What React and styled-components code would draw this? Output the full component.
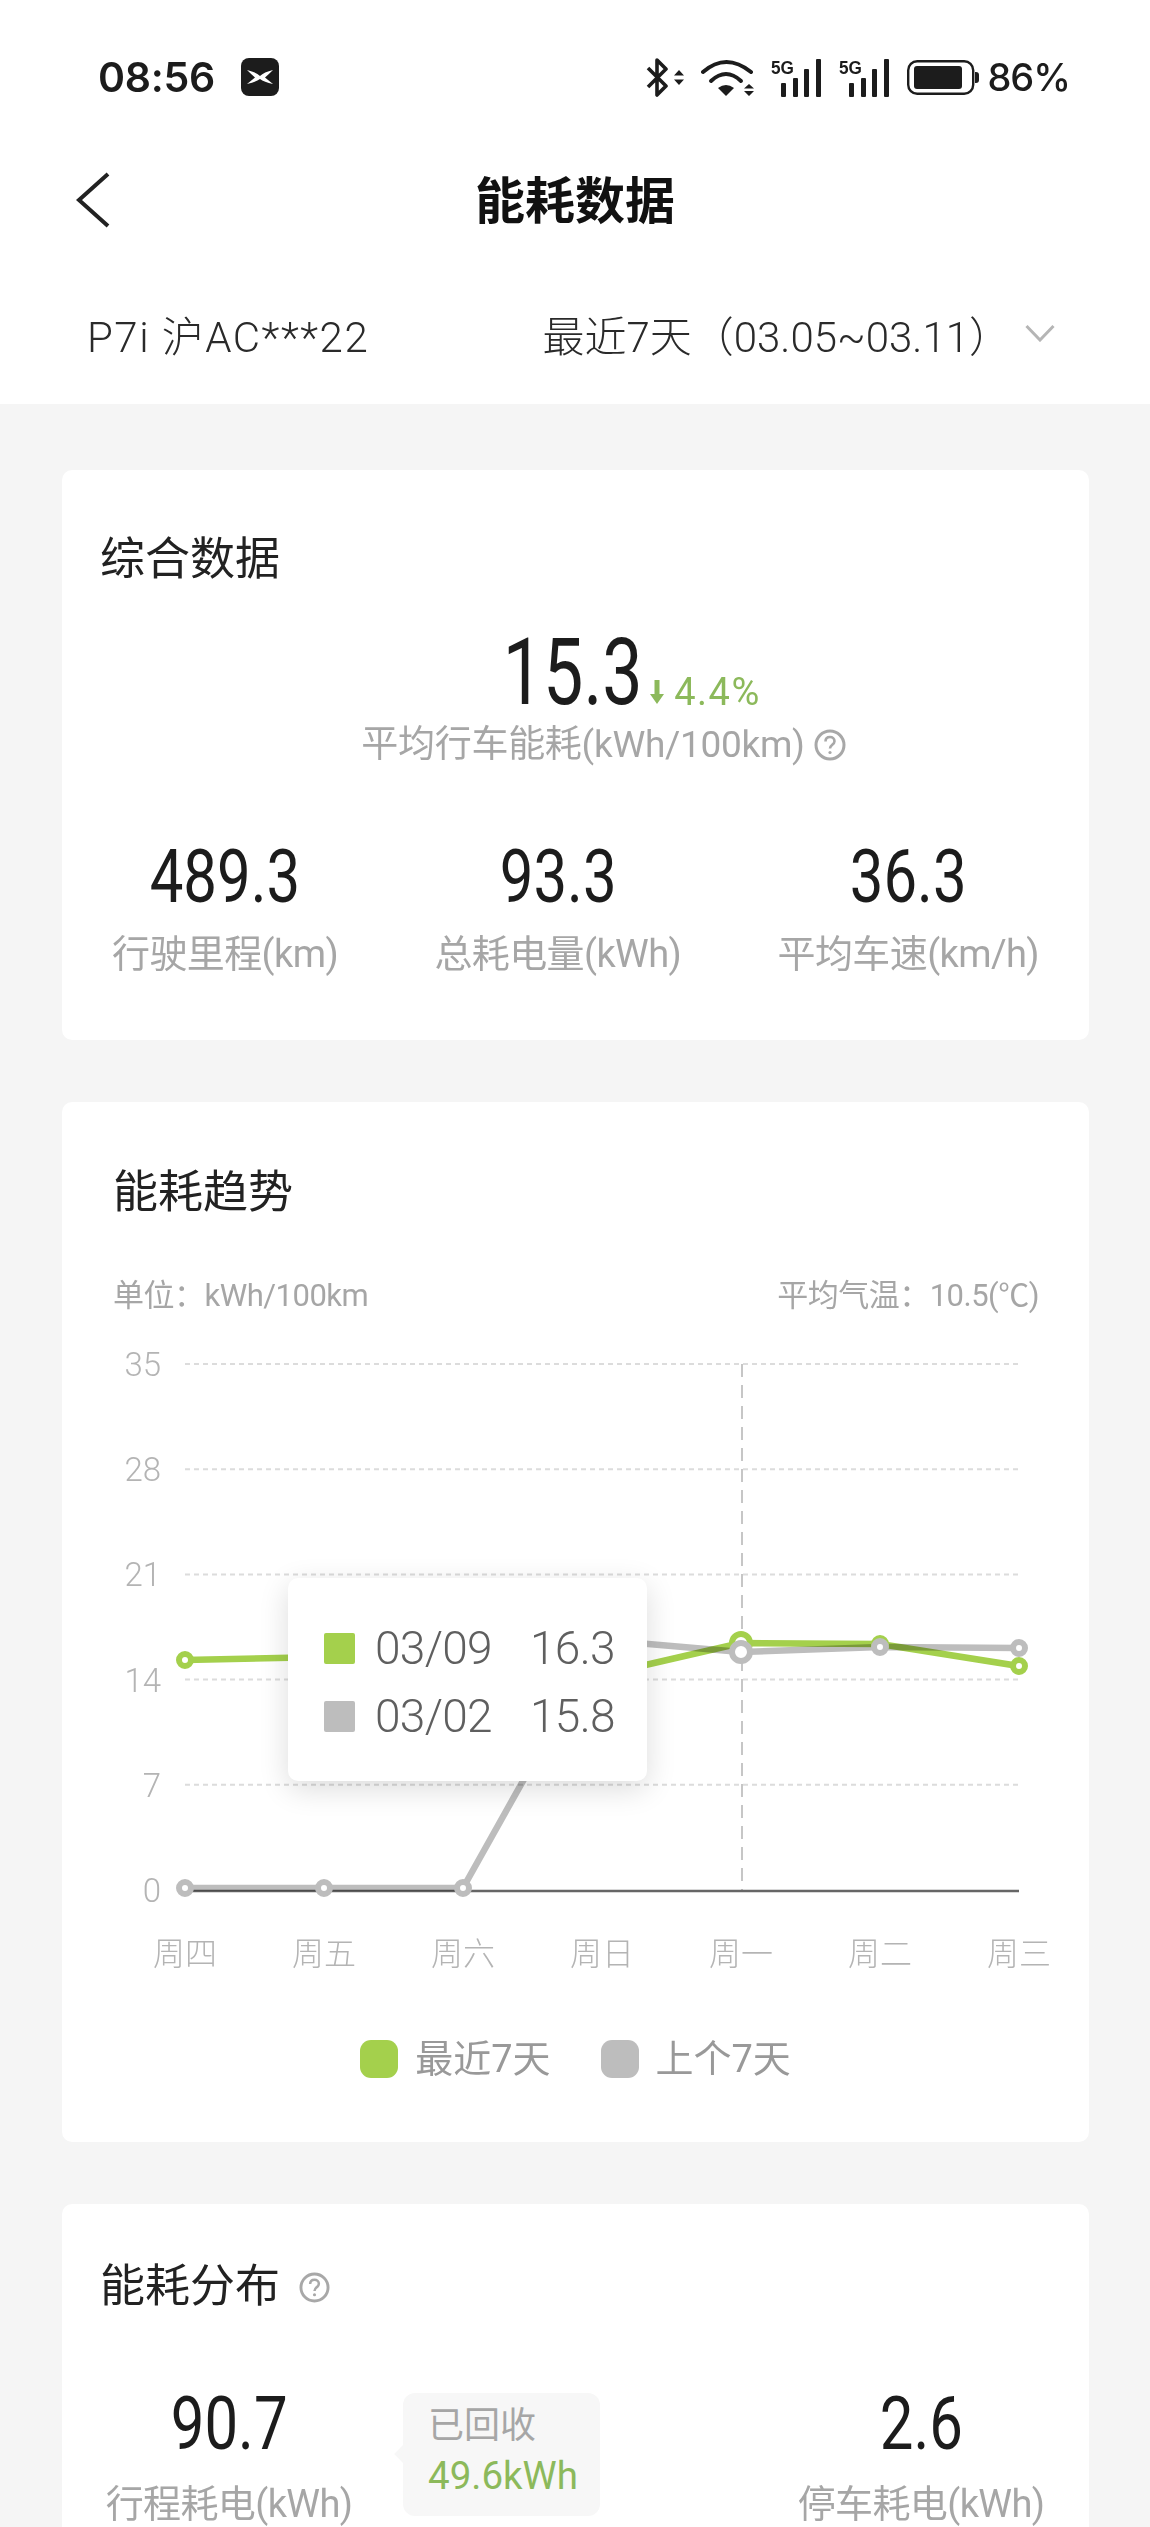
import React from 'react';
import styled, { createGlobalStyle } from 'styled-components';

const GlobalStyle = createGlobalStyle`
  html, body {
    margin: 0;
    height: 2527px;
    overflow: hidden;
    background: #f5f5f5;
  }
  body {
    font-family: Roboto, "Noto Sans CJK SC", sans-serif;
    color: #1c1c1c;
  }
`;

const Page = styled.div`
  width: 1150px;
`;

const Header = styled.header`
  background: #fff;
`;

const StatusBar = styled.div`
  height: 154px;
  display: flex;
  align-items: center;
  justify-content: space-between;
  padding: 0 80px 0 98px;
  box-sizing: border-box;
`;

const StatusLeft = styled.div`
  display: flex;
  align-items: center;
  gap: 26px;
`;

const Clock = styled.span`
  font-family: Inter, sans-serif;
  font-size: 41px;
  font-weight: 600;
  letter-spacing: -0.3px;
`;

const StatusRight = styled.div`
  display: flex;
  align-items: center;
  gap: 16px;
`;

const Percent = styled.span`
  font-family: Inter, sans-serif;
  font-size: 38px;
  font-weight: 500;
  letter-spacing: -1px;
  margin-left: -8px;
`;

const NavBar = styled.nav`
  height: 92px;
  display: grid;
  grid-template-columns: 1fr auto 1fr;
  align-items: center;
  padding: 0 75px;
`;

const NavTitle = styled.h1`
  margin: 0 0 7px;
  font-size: 50px;
  font-weight: 700;
  color: #111;
`;

const FilterRow = styled.div`
  height: 158px;
  box-sizing: border-box;
  padding: 16px 95px 0 87px;
  display: flex;
  align-items: center;
  justify-content: space-between;
  font-size: 42px;
  font-weight: 300;
  color: #2a2a2a;
`;

const Plate = styled.span`
  letter-spacing: 1.5px;
`;

const Range = styled.div`
  display: flex;
  align-items: center;
  gap: 14px;
`;

const Main = styled.main`
  padding: 66px 61px 0 62px;
  display: flex;
  flex-direction: column;
  gap: 62px;
`;

const Card = styled.section`
  background: #fff;
  border-radius: 10px;
  padding: ${p => p.$top}px 0 ${p => p.$bottom}px;
`;

const CardTitle = styled.h2`
  margin: 0;
  padding: 6px 0 0 ${p => p.$inset}px;
  display: flex;
  align-items: center;
  gap: 19px;
  font-size: 45px;
  line-height: 58px;
  font-weight: 400;
  color: #222;
`;

const Hero = styled.div`
  margin-top: 34px;
  display: flex;
  flex-direction: column;
  align-items: center;
`;

const HeroValue = styled.div`
  position: relative;
  margin-left: -6px;
`;

// 参考图的数字字体偏窄，这里横向压缩
const HeroDigits = styled.div`
  font-size: 92px;
  line-height: 100px;
  transform: scaleX(0.78);
`;

const Delta = styled.span`
  position: absolute;
  left: 100%;
  bottom: 9px;
  margin-left: -12px;
  display: flex;
  align-items: center;
  gap: 10px;
  font-size: 38px;
  line-height: 44px;
  letter-spacing: 1.5px;
  white-space: nowrap;
  color: #8cb95b;
`;

const HeroLabel = styled.div`
  margin: 0 0 0 56px;
  display: flex;
  align-items: center;
  gap: 9px;
  font-size: 37px;
  line-height: 44px;
  color: #a6a6a6;
  letter-spacing: -0.3px;
`;

const StatsRow = styled.div`
  margin-top: 68px;
  padding: 0 50px;
  display: flex;
  justify-content: space-between;
`;

const Stat = styled.div`
  display: flex;
  flex-direction: column;
  align-items: center;
`;

const StatValue = styled.div`
  font-size: 74px;
  line-height: 84px;
  color: #1c1c1c;
  transform: scaleX(0.81);
`;

const StatLabel = styled.div`
  margin-top: ${p => p.$gap}px;
  font-size: 38px;
  line-height: 44px;
  color: #a6a6a6;
  letter-spacing: -0.6px;
  white-space: nowrap;
`;

const UnitRow = styled.div`
  margin-top: 54px;
  padding: 0 50px 0 51px;
  display: flex;
  justify-content: space-between;
  font-size: 31px;
  line-height: 40px;
  color: #a6a6a6;
  letter-spacing: -0.5px;
`;

const ChartBox = styled.div`
  position: relative;
  margin-top: 24px;
  height: 640px;
`;

const ChartSvg = styled.svg`
  display: block;
  width: 1027px;
  height: 640px;
`;

const GridLine = styled.line`
  stroke: #dcdcdc;
  stroke-width: 2;
  stroke-dasharray: 5 4;
`;

const CursorLine = styled.line`
  stroke: #c6c6c6;
  stroke-width: 2;
  stroke-dasharray: 13 8;
`;

const AxisLine = styled.line`
  stroke: #666;
  stroke-width: 2.5;
`;

const SeriesLine = styled.polyline`
  fill: none;
  stroke: ${p => p.$color};
  stroke-width: 6.5;
  stroke-linejoin: round;
  mix-blend-mode: multiply;
`;

const Marker = styled.circle`
  fill: #fff;
  stroke: ${p => p.$color};
  stroke-width: 6;
`;

const AxisText = styled.text`
  font-family: Roboto, "Noto Sans CJK SC", sans-serif;
  font-size: ${p => p.$size}px;
  font-weight: 300;
  fill: #b4b4b4;
`;

const Tooltip = styled.div`
  position: absolute;
  left: 226px;
  top: 238px;
  width: 359px;
  height: 203px;
  box-sizing: border-box;
  padding: 36px 0 0 36px;
  background: #fff;
  border-radius: 10px;
  box-shadow: 0 8px 30px rgba(0, 0, 0, 0.14);
`;

const TipRow = styled.div`
  display: flex;
  align-items: center;
  height: 68px;
  font-size: 46px;
  font-weight: 300;
  color: #5f5f5f;
  letter-spacing: -0.7px;
`;

const TipSwatch = styled.i`
  width: 31px;
  height: 31px;
  margin-right: 20px;
  border-radius: 2px;
  background: ${p => p.$color};
`;

const TipDate = styled.span`
  width: 155px;
`;

const Legend = styled.div`
  margin-top: 57px;
  display: flex;
  justify-content: center;
  gap: 50px;
`;

const LegendItem = styled.div`
  display: flex;
  align-items: center;
  gap: 17px;
  font-size: 38px;
  line-height: 44px;
  color: #999;
`;

const LegendSwatch = styled.i`
  width: 38px;
  height: 38px;
  border-radius: 11px;
  background: ${p => p.$color};
`;

const SplitRow = styled.div`
  margin-top: 66px;
  display: grid;
  grid-template-columns: 334px 1fr 336px;
`;

const Bubble = styled.div`
  position: relative;
  justify-self: start;
  margin: 11px 0 0 7px;
  width: 197px;
  height: 123px;
  box-sizing: border-box;
  padding: 8px 0 0 25px;
  border-radius: 12px;
  background: #f7f7f7;
  font-size: 36px;
  line-height: 50px;
  color: #a6a6a6;

  &::before {
    content: '';
    position: absolute;
    left: -6px;
    top: 54px;
    width: 14px;
    height: 14px;
    background: #f7f7f7;
    transform: rotate(45deg);
  }
`;

const Recovered = styled.div`
  color: #8cb95b;
  font-size: 38.5px;
`;

const days = ['周四', '周五', '周六', '周日', '周一', '周二', '周三'];
const ticks = [35, 28, 21, 14, 7, 0];
const xOf = i => 123 + i * 139;
const yTop = 24;
const yStep = 105.2;

// y 是相对图表容器的像素位置
const recent = [320, 317, 318, 335, 303, 304, 326];
const previous = [548, 548, 548, 300, 312, 307, 308];
const GREEN = '#a4d04c';
const GRAY = '#bdbdbd';

const toPoints = ys => ys.map((y, i) => `${xOf(i)},${y}`).join(' ');

const HelpIcon = ({ size }) => (
  <svg width={size} height={size} viewBox="0 0 32 32" fill="none" stroke="#a8a8a8" strokeWidth="3">
    <circle cx="16" cy="16" r="14" />
    <path d="M11.5 12.5c0-3 2-4.5 4.5-4.5s4.5 1.6 4.5 4.2c0 3.6-4.5 3.6-4.5 7.3" strokeWidth="2.6" />
    <circle cx="16" cy="23.5" r="1.6" fill="#a8a8a8" stroke="none" />
  </svg>
);

const SignalIcon = () => (
  <svg width="52" height="39" viewBox="0 0 52 39" fill="#1c1c1c">
    <text x="0" y="16" fontFamily="Liberation Sans, sans-serif" fontWeight="700" fontSize="19" textLength="23" lengthAdjust="spacingAndGlyphs">5G</text>
    <rect x="10" y="25" width="5" height="14" rx="1" />
    <rect x="22" y="20" width="5" height="19" rx="1" />
    <rect x="33" y="11" width="5" height="28" rx="1" />
    <rect x="45" y="1" width="5" height="38" rx="1" />
  </svg>
);

const Chart = () => (
  <ChartSvg viewBox="0 0 1027 640">
    {ticks.slice(0, 5).map((t, i) => (
      <GridLine key={t} x1="123" x2="957" y1={yTop + i * yStep} y2={yTop + i * yStep} />
    ))}
    {ticks.map((t, i) => (
      <AxisText key={t} $size={33} x="99" y={yTop + i * yStep + 12} textAnchor="end">{t}</AxisText>
    ))}
    <CursorLine x1="680" x2="680" y1={yTop} y2={yTop + 5 * yStep} />
    <AxisLine x1="123" x2="957" y1={yTop + 5 * yStep + 1} y2={yTop + 5 * yStep + 1} />
    <SeriesLine $color={GREEN} points={toPoints(recent)} />
    <SeriesLine $color={GRAY} points={toPoints(previous)} />
    {recent.map((y, i) => (
      <Marker key={i} $color={GREEN} cx={xOf(i)} cy={y} r={i === 4 ? 9 : 6} />
    ))}
    {previous.map((y, i) => (
      <Marker key={i} $color={GRAY} cx={xOf(i)} cy={y} r={i === 4 ? 9 : 6} />
    ))}
    {days.map((d, i) => (
      <AxisText key={d} $size={32} x={xOf(i)} y="625" textAnchor="middle">{d}</AxisText>
    ))}
  </ChartSvg>
);

const App = () => (
  <Page>
    <GlobalStyle />
    <Header>
      <StatusBar>
        <StatusLeft>
          <Clock>08:56</Clock>
          <svg width="38" height="38" viewBox="0 0 38 38">
            <rect width="38" height="38" rx="8" fill="#1c1c1c" />
            <path d="M6 12Q15 14 19 18Q23 14 32 12Q27 17 24 19.5Q27 22 32 26Q23 24 19 21Q15 24 6 26Q11 22 14 19.5Q11 17 6 12Z" fill="#fff" />
          </svg>
        </StatusLeft>
        <StatusRight>
          <svg width="39" height="39" viewBox="0 0 39 39" fill="#1c1c1c">
            <path d="M2 10L20 28L11 37V2L20 11L2 29" fill="none" stroke="#1c1c1c" strokeWidth="3.6" strokeLinejoin="round" />
            <path d="M28 17.5H38L33 12ZM28 21.5H38L33 27Z" />
          </svg>
          <svg width="54" height="39" viewBox="0 0 54 39" fill="#1c1c1c">
            <g fill="none" stroke="#1c1c1c" strokeWidth="4" strokeLinecap="round">
              <path d="M2 14Q25 -6 50 14" />
              <path d="M10 23Q25 9 40 23" />
            </g>
            <path d="M17 30Q25 24 33 30L25 38Z" />
            <path d="M43 30.5H53L48 26ZM43 33H53L48 38Z" />
          </svg>
          <SignalIcon />
          <SignalIcon />
          <svg width="72" height="35" viewBox="0 0 72 35" fill="#1c1c1c">
            <rect x="1.2" y="1.2" width="65" height="32.6" rx="9" fill="none" stroke="#1c1c1c" strokeWidth="2.4" />
            <rect x="7" y="6" width="48" height="23" rx="3" />
            <path d="M68 12h1a3 3 0 0 1 3 3v5a3 3 0 0 1-3 3h-1z" />
          </svg>
          <Percent>86%</Percent>
        </StatusRight>
      </StatusBar>
      <NavBar>
        <svg width="36" height="56" viewBox="0 0 36 56" fill="none" stroke="#222" strokeWidth="4">
          <path d="M33 2L4 28L33 54" />
        </svg>
        <NavTitle>能耗数据</NavTitle>
      </NavBar>
      <FilterRow>
        <Plate>P7i 沪AC***22</Plate>
        <Range>
          <span>最近7天（03.05~03.11）</span>
          <svg width="30" height="18" viewBox="0 0 30 18" fill="none" stroke="#b5b5b5" strokeWidth="3">
            <path d="M1.5 2L15 16L28.5 2" />
          </svg>
        </Range>
      </FilterRow>
    </Header>
    <Main>
      <Card $top={55} $bottom={64}>
        <CardTitle $inset={38}>综合数据</CardTitle>
        <Hero>
          <HeroValue>
            <HeroDigits>15.3</HeroDigits>
            <Delta>
              <svg width="14" height="24" viewBox="0 0 14 24" fill="#8cb95b">
                <path d="M4.5 0h5v14H14L7 24 0 14h4.5z" />
              </svg>
              4.4%
            </Delta>
          </HeroValue>
          <HeroLabel>
            平均行车能耗(kWh/100km)
            <HelpIcon size={32} />
          </HeroLabel>
        </Hero>
        <StatsRow>
          <Stat>
            <StatValue>489.3</StatValue>
            <StatLabel $gap={13}>行驶里程(km)</StatLabel>
          </Stat>
          <Stat>
            <StatValue>93.3</StatValue>
            <StatLabel $gap={13}>总耗电量(kWh)</StatLabel>
          </Stat>
          <Stat>
            <StatValue>36.3</StatValue>
            <StatLabel $gap={13}>平均车速(km/h)</StatLabel>
          </Stat>
        </StatsRow>
      </Card>
      <Card $top={56} $bottom={61}>
        <CardTitle $inset={51}>能耗趋势</CardTitle>
        <UnitRow>
          <span>单位：kWh/100km</span>
          <span>平均气温：10.5(℃)</span>
        </UnitRow>
        <ChartBox>
          <Chart />
          <Tooltip>
            <TipRow>
              <TipSwatch $color={GREEN} />
              <TipDate>03/09</TipDate>
              <span>16.3</span>
            </TipRow>
            <TipRow>
              <TipSwatch $color={GRAY} />
              <TipDate>03/02</TipDate>
              <span>15.8</span>
            </TipRow>
          </Tooltip>
        </ChartBox>
        <Legend>
          <LegendItem>
            <LegendSwatch $color={GREEN} />
            最近7天
          </LegendItem>
          <LegendItem>
            <LegendSwatch $color={GRAY} />
            上个7天
          </LegendItem>
        </Legend>
      </Card>
      <Card $top={48} $bottom={60}>
        <CardTitle $inset={38}>
          能耗分布
          <HelpIcon size={31} />
        </CardTitle>
        <SplitRow>
          <Stat>
            <StatValue>90.7</StatValue>
            <StatLabel $gap={16}>行程耗电(kWh)</StatLabel>
          </Stat>
          <Bubble>
            已回收
            <Recovered>49.6kWh</Recovered>
          </Bubble>
          <Stat>
            <StatValue>2.6</StatValue>
            <StatLabel $gap={16}>停车耗电(kWh)</StatLabel>
          </Stat>
        </SplitRow>
      </Card>
    </Main>
  </Page>
);

export default App;
